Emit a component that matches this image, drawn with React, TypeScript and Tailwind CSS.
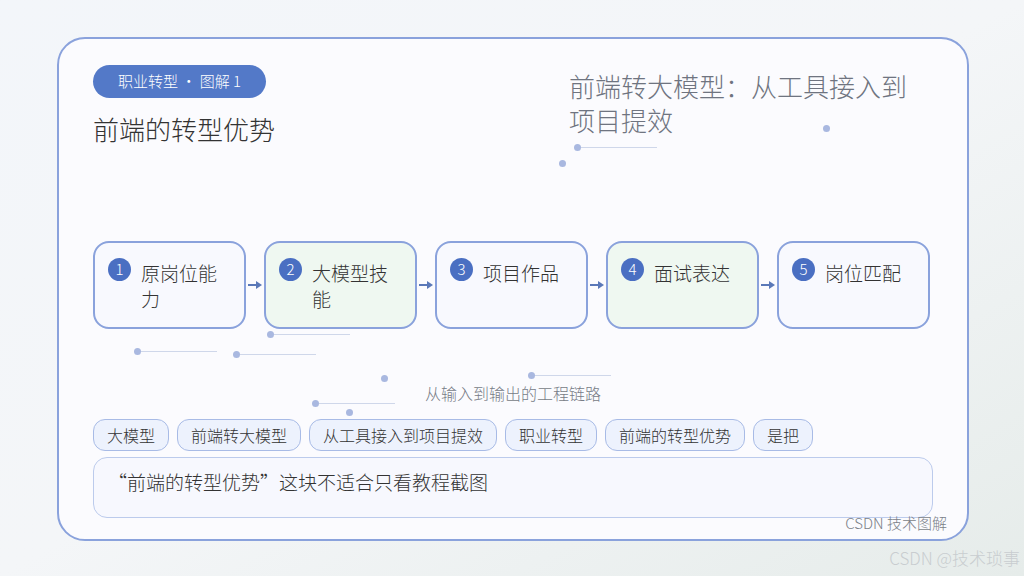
export default function App() {
  const f = { fontFamily: '"Noto Sans CJK SC", "Noto Sans", sans-serif' };
  const steps = [
    { n: 1, t: "原岗位能力", g: false },
    { n: 2, t: "大模型技能", g: true },
    { n: 3, t: "项目作品", g: false },
    { n: 4, t: "面试表达", g: true },
    { n: 5, t: "岗位匹配", g: false },
  ];
  const tags = ["大模型", "前端转大模型", "从工具接入到项目提效", "职业转型", "前端的转型优势", "是把"];
  const deco = [
    [137, 351, 76], [236, 354, 76], [270, 334, 76], [577, 147, 76], [562, 163, 0], [826, 128, 0],
    [384, 378, 0], [531, 375, 76], [315, 403, 76], [349, 412, 0],
  ];
  return (
    <div style={f} className="relative w-[1024px] h-[576px] overflow-hidden font-light bg-gradient-to-br from-[#f3f6fa] via-[#f4f6f8] to-[#e6ecea]">
      <div className="absolute left-[57px] top-[37px] w-[912px] h-[504px] rounded-[28px] border-2 border-[#8aa2dc] bg-[#fbfbfe] flex flex-col px-[34px] pt-[26px]">
        <div className="flex justify-between">
          <div className="flex flex-col">
            <div className="w-[173px] h-[33px] rounded-full bg-[#5379c8] text-white text-[15px] flex items-center justify-center">职业转型 · 图解 1</div>
            <div className="mt-[14px] text-[26px] text-[#333] leading-[34px]">前端的转型优势</div>
          </div>
          <div className="w-[350px] text-[26px] leading-[34px] text-[#6f7480] mt-[4px] mr-[14px]">前端转大模型：从工具接入到项目提效</div>
        </div>
        <div className="flex items-center mt-[95px]">
          {steps.map((s, i) => (
            <div key={s.n} className="flex items-center">
              <div className={`w-[153px] h-[88px] rounded-[16px] border-2 border-[#8aa2dc] ${s.g ? "bg-[#eff8f1]" : "bg-[#f8f9fe]"} flex items-start pl-[13px] pt-[15px] pr-[10px]`}>
                <div className="w-[23px] h-[23px] shrink-0 rounded-full bg-[#4a6fc2] text-white text-[15px] flex items-center justify-center">{s.n}</div>
                <div className="ml-[10px] text-[19px] leading-[26px] text-[#333] mt-[2px]">{s.t}</div>
              </div>
              {i < 4 && (
                <svg width="18" height="10" viewBox="0 0 18 10"><path d="M2 5h10" stroke="#5a78b8" strokeWidth="2" /><path d="M10 1l6 4-6 4z" fill="#5a78b8" /></svg>
              )}
            </div>
          ))}
        </div>
        <div className="text-center text-[16px] text-[#777c86] mt-[52px]">从输入到输出的工程链路</div>
        <div className="flex gap-[8px] mt-[14px]">
          {tags.map((t) => (
            <div key={t} className="h-[32px] px-[13px] rounded-[12px] border border-[#a8bbe6] bg-[#edf2fd] text-[16px] text-[#333] flex items-center">{t}</div>
          ))}
        </div>
        <div className="mt-[6px] w-[840px] h-[61px] rounded-[14px] border border-[#bccbec] bg-[#f7f8fe] text-[19px] text-[#333] pl-[14px] pt-[10px]">“前端的转型优势”这块不适合只看教程截图</div>
        <div className="self-end text-[15px] text-[#7a7f88] -mt-[6px] mr-[-14px]">CSDN 技术图解</div>
      </div>
      {deco.map(([x, y, w], i) => (
        <div key={i} className="absolute flex items-center" style={{ left: x - 3, top: y - 3 }}>
          <div className="w-[7px] h-[7px] rounded-full bg-[#a9b8e0]" />
          {w > 0 && <div className="h-px bg-[#cfd7ea]" style={{ width: w }} />}
        </div>
      ))}
      <div className="absolute right-[4px] bottom-[6px] text-[17px] text-[#c9cdd0]">CSDN @技术琐事</div>
    </div>
  );
}
